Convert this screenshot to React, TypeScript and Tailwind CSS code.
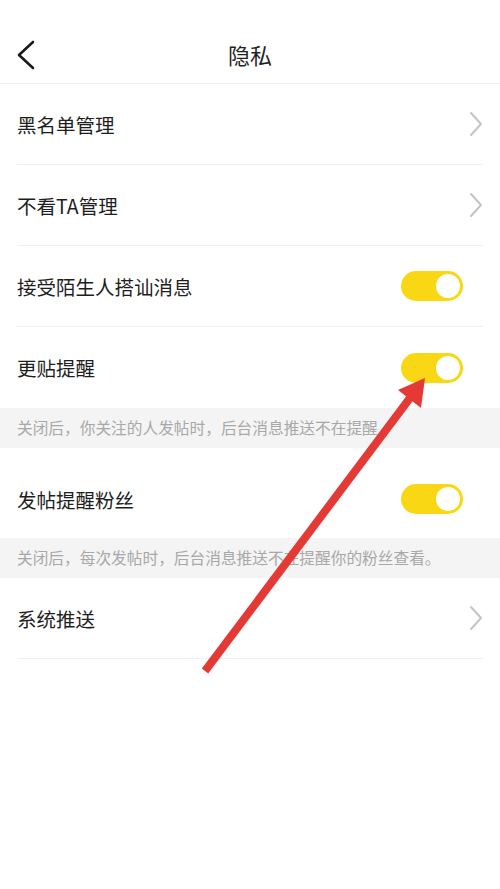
import React from "react";

const font = { fontFamily: '"Noto Sans CJK SC", "Noto Sans", sans-serif' };

function Chevron() {
  return (
    <svg width="14" height="26" viewBox="0 0 14 26" fill="none">
      <path d="M2 2 L12 13 L2 24" stroke="#c4c4c4" strokeWidth="2" strokeLinecap="round" strokeLinejoin="round" />
    </svg>
  );
}

function Toggle() {
  return (
    <div className="w-[62px] h-[30px] rounded-full bg-[#fad714] flex items-center justify-end pr-[3px]">
      <div className="w-[24px] h-[24px] rounded-full bg-white" />
    </div>
  );
}

function Row({
  label,
  right,
  border = true,
  tall = false,
}: {
  label: string;
  right: "chevron" | "toggle";
  border?: boolean;
  tall?: boolean;
}) {
  return (
    <div className="pl-[17px] pr-[17px]">
      <div
        className={`${tall ? "h-[90px] pt-[12px]" : "h-[81px]"} flex items-center justify-between ${
          border ? "border-b border-[#f0f0f0]" : ""
        }`}
      >
        <span className="text-[19.5px] text-[#1e1e1e] pt-[1px]">{label}</span>
        <div className={right === "chevron" ? "pr-0" : "pr-[20px]"}>
          {right === "chevron" ? <Chevron /> : <Toggle />}
        </div>
      </div>
    </div>
  );
}

function Hint({ text }: { text: string }) {
  return (
    <div className="h-[40px] bg-[#f4f4f4] flex items-center pl-[17px]">
      <span className="text-[15.7px] text-[#a8a8a8]">{text}</span>
    </div>
  );
}

export default function App() {
  return (
    <div className="relative w-[500px] h-[889px] bg-white overflow-hidden" style={font}>
      <div className="h-[84px] flex items-center justify-center relative border-b border-[#f2f2f2] pt-[26px]">
        <div className="absolute left-[16px] top-[40px]">
          <svg width="20" height="30" viewBox="0 0 20 30" fill="none">
            <path d="M17 2 L3 15 L17 28" stroke="#1a1a1a" strokeWidth="2.6" strokeLinecap="round" strokeLinejoin="round" />
          </svg>
        </div>
        <span className="text-[22px] text-[#222]">隐私</span>
      </div>
      <Row label="黑名单管理" right="chevron" />
      <Row label="不看TA管理" right="chevron" />
      <Row label="接受陌生人搭讪消息" right="toggle" />
      <Row label="更贴提醒" right="toggle" border={false} />
      <Hint text="关闭后，你关注的人发帖时，后台消息推送不在提醒" />
      <Row label="发帖提醒粉丝" right="toggle" border={false} tall />
      <Hint text="关闭后，每次发帖时，后台消息推送不在提醒你的粉丝查看。" />
      <Row label="系统推送" right="chevron" />

      <svg className="absolute left-0 top-0 pointer-events-none" width="500" height="889" viewBox="0 0 500 889">
        <line x1="205" y1="671" x2="410" y2="398" stroke="#e53935" strokeWidth="8" strokeLinecap="butt" />
        <polygon points="425,378 398,390 421,408" fill="#e53935" />
      </svg>
    </div>
  );
}
